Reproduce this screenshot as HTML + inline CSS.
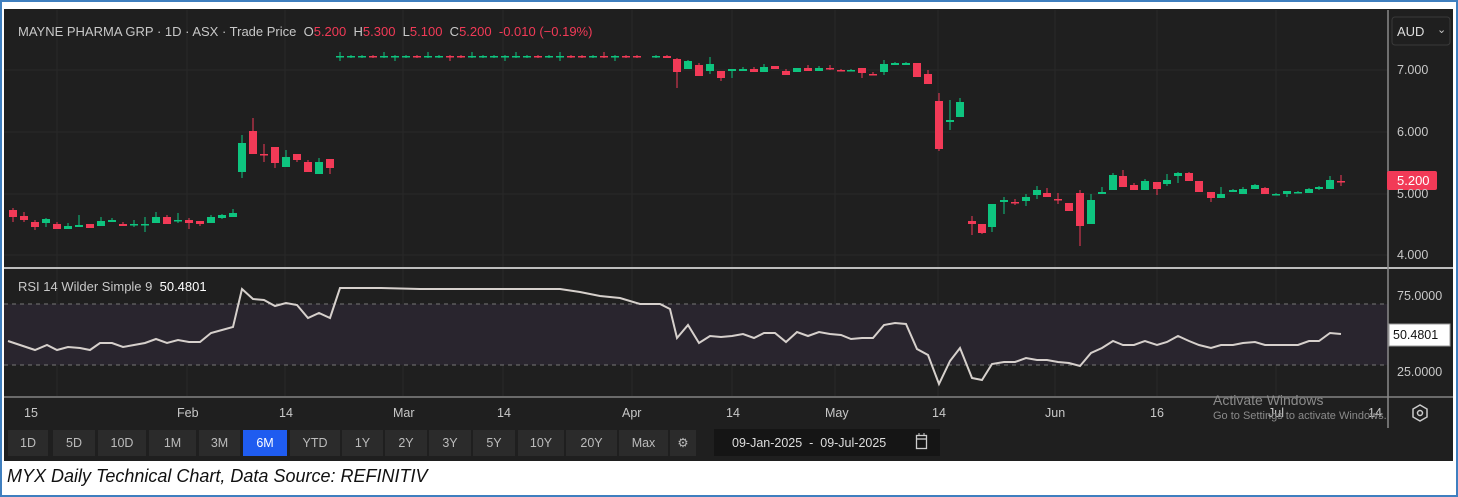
<!DOCTYPE html>
<html><head><meta charset="utf-8"><style>
html,body{margin:0;padding:0;width:1458px;height:497px;overflow:hidden;background:#fff;font-family:"Liberation Sans",sans-serif}
#frame{position:absolute;left:0;top:0;width:1454px;height:493px;border:2px solid #3f7fbf}
#dark{position:absolute;left:4px;top:9px;width:1449px;height:452px;background:#1f1f1f}
.cap{position:absolute;left:7px;top:466px;font-size:18px;font-style:italic;color:#111}
.btn{position:absolute;top:430px;height:26px;background:#2b2b2b;color:#bbb;font-size:12.5px;line-height:26px;text-align:center}
.t{position:absolute;font-size:12.5px;color:#c8c8c8}
</style></head><body>
<div id="frame"></div>
<div id="dark"></div>
<svg id="s" width="1458" height="497" style="position:absolute;left:0;top:0">
<g stroke="#282828" stroke-width="1">
<line x1="4" y1="70" x2="1388" y2="70"/><line x1="4" y1="132" x2="1388" y2="132"/><line x1="4" y1="194" x2="1388" y2="194"/><line x1="4" y1="255" x2="1388" y2="255"/>
<line x1="57" y1="10" x2="57" y2="396"/><line x1="187" y1="10" x2="187" y2="396"/><line x1="285" y1="10" x2="285" y2="396"/><line x1="403" y1="10" x2="403" y2="396"/><line x1="503" y1="10" x2="503" y2="396"/><line x1="632" y1="10" x2="632" y2="396"/><line x1="732" y1="10" x2="732" y2="396"/><line x1="835" y1="10" x2="835" y2="396"/><line x1="938" y1="10" x2="938" y2="396"/><line x1="1055" y1="10" x2="1055" y2="396"/><line x1="1157" y1="10" x2="1157" y2="396"/><line x1="1276" y1="10" x2="1276" y2="396"/>
</g>
<rect x="4" y="304" width="1384" height="61" fill="#29252e"/>
<line x1="4" y1="304" x2="1388" y2="304" stroke="#777" stroke-dasharray="4,4"/>
<line x1="4" y1="365" x2="1388" y2="365" stroke="#777" stroke-dasharray="4,4"/>
<line x1="4" y1="268" x2="1453" y2="268" stroke="#bdbdbd" stroke-width="2"/>
<line x1="4" y1="397" x2="1453" y2="397" stroke="#6a6a6a" stroke-width="2"/>
<line x1="1388" y1="10" x2="1388" y2="428" stroke="#8a8a8a" stroke-width="1.5"/>
<g id="c"></g>
<polyline fill="none" stroke="#d6d0cc" stroke-width="2" points="8,341 20,345 35,350 47,345 57,350 68,347 80,348 90,350 100,343 112,343 123,347 134,345 145,343 156,339 167,343 178,340 189,342 200,342 211,333 222,330 233,327 242,289 253,299 264,300 275,306 286,303 297,305 308,318 319,313 330,318 340,288 380,288 420,289 560,289 580,292 600,296 620,298 640,304 660,304 670,309 677,338 688,325 699,343 710,336 721,337 732,336 743,334 754,338 764,333 775,333 786,342 797,332 808,336 819,332 830,334 841,335 851,339 862,338 873,338 884,325 895,323 906,324 917,349 928,355 939,384 950,361 960,348 972,378 982,380 992,364 1004,362 1015,362 1026,358 1037,360 1047,360 1058,362 1069,363 1080,366 1091,353 1102,348 1113,341 1123,345 1134,345 1145,341 1157,345 1167,342 1178,336 1189,341 1199,345 1211,348 1221,345 1233,345 1243,343 1255,342 1265,345 1276,345 1287,345 1298,345 1309,341 1319,341 1330,333 1341,334"/>
<rect x="1392" y="17" width="58" height="28" rx="3" fill="#1f1f1f" stroke="#3a3a3a"/>
<rect x="1387" y="171" width="50" height="19" rx="2" fill="#f23a57"/>
<rect x="1389" y="324" width="61" height="22" fill="#fff" stroke="#999"/>
<polygon points="1420,405 1427,409 1427,417 1420,421 1413,417 1413,409" fill="none" stroke="#ccc" stroke-width="1.5"/>
<circle cx="1420" cy="413" r="2.5" fill="none" stroke="#ccc" stroke-width="1.5"/>
<rect x="714" y="429" width="226" height="27" fill="#151515"/>
<rect x="916.5" y="435.5" width="10" height="13" fill="none" stroke="#ccc" stroke-width="1.3"/>
<line x1="916.5" y1="439" x2="926.5" y2="439" stroke="#ccc" stroke-width="1.3"/>
<line x1="919" y1="433" x2="919" y2="436" stroke="#ccc"/><line x1="924" y1="433" x2="924" y2="436" stroke="#ccc"/>
</svg>
<div class="t" style="left:18px;top:24px;font-size:13px">MAYNE PHARMA GRP · 1D · ASX · Trade Price&nbsp;&nbsp;O<span style="color:#f23a57">5.200</span>&nbsp;&nbsp;H<span style="color:#f23a57">5.300</span>&nbsp;&nbsp;L<span style="color:#f23a57">5.100</span>&nbsp;&nbsp;C<span style="color:#f23a57">5.200</span>&nbsp;&nbsp;<span style="color:#f23a57">-0.010 (−0.19%)</span></div>
<div class="t" style="left:18px;top:279px;font-size:13px">RSI 14 Wilder Simple 9&nbsp;&nbsp;<b style="color:#fff;font-weight:normal">50.4801</b></div>
<div class="t" style="left:1397px;top:24px;font-size:13px;color:#ddd">AUD</div>
<div class="t" style="left:1437px;top:23px;font-size:11px">⌄</div>
<div class="t" style="left:1397px;top:63px">7.000</div>
<div class="t" style="left:1397px;top:125px">6.000</div>
<div class="t" style="left:1397px;top:187px">5.000</div>
<div class="t" style="left:1397px;top:173px;color:#fff;font-size:13px">5.200</div>
<div class="t" style="left:1397px;top:248px">4.000</div>
<div class="t" style="left:1397px;top:289px">75.0000</div>
<div class="t" style="left:1393px;top:328px;color:#111">50.4801</div>
<div class="t" style="left:1397px;top:365px">25.0000</div>
<div class="t" style="left:24px;top:406px">15</div><div class="t" style="left:177px;top:406px">Feb</div><div class="t" style="left:279px;top:406px">14</div><div class="t" style="left:393px;top:406px">Mar</div><div class="t" style="left:497px;top:406px">14</div><div class="t" style="left:622px;top:406px">Apr</div><div class="t" style="left:726px;top:406px">14</div><div class="t" style="left:825px;top:406px">May</div><div class="t" style="left:932px;top:406px">14</div><div class="t" style="left:1045px;top:406px">Jun</div><div class="t" style="left:1150px;top:406px">16</div><div class="t" style="left:1268px;top:406px">Jul</div><div class="t" style="left:1368px;top:406px">14</div>
<div class="t" style="left:1213px;top:392px;font-size:14px;color:#8a8a8a">Activate Windows</div>
<div class="t" style="left:1213px;top:410px;font-size:11px;color:#8a8a8a">Go to Settings to activate Windows.</div>
<div class="btn" style="left:8px;width:40px">1D</div><div class="btn" style="left:53px;width:42px">5D</div><div class="btn" style="left:98px;width:48px">10D</div><div class="btn" style="left:149px;width:47px">1M</div><div class="btn" style="left:199px;width:41px">3M</div><div class="btn" style="left:243px;width:44px;background:#1f5cf0;color:#fff">6M</div><div class="btn" style="left:290px;width:50px">YTD</div><div class="btn" style="left:342px;width:41px">1Y</div><div class="btn" style="left:385px;width:42px">2Y</div><div class="btn" style="left:429px;width:42px">3Y</div><div class="btn" style="left:473px;width:42px">5Y</div><div class="btn" style="left:518px;width:46px">10Y</div><div class="btn" style="left:566px;width:51px">20Y</div><div class="btn" style="left:619px;width:49px">Max</div><div class="btn" style="left:670px;width:26px">⚙</div>
<div class="t" style="left:732px;top:436px;color:#ddd">09-Jan-2025&nbsp;&nbsp;-&nbsp;&nbsp;09-Jul-2025</div>
<div class="cap">MYX Daily Technical Chart, Data Source: REFINITIV</div>
<script>
var G="#0ec47f",R="#f23a57";
var d=[
[13,R,210,217,208,222],[24,R,216,220,212,222],[35,R,222,227,220,230],[46,G,219,223,218,227],[57,R,224,229,222,229],[68,G,226,229,223,229],[79,G,225,227,215,227],[90,R,224,228,224,228],[101,G,221,226,217,226],[112,G,220,222,218,222],[123,R,224,226,222,226],[134,G,224,225,220,227],[145,G,224,225,217,232],[156,G,217,223,212,223],[167,R,217,224,215,224],[178,G,220,221,213,223],[189,R,220,223,218,229],[200,R,221,224,221,226],[211,G,217,223,215,223],[222,G,215,218,214,219],[233,G,213,217,209,217],
[242,G,143,172,135,178],[253,R,131,154,118,154],[264,R,154,155,144,162],[275,R,147,163,147,168],[286,G,157,167,150,167],[297,R,154,160,154,162],[308,R,162,172,160,172],[319,G,162,174,158,174],[330,R,159,168,159,174]];
var f=[G,G,G,R,G,G,G,R,G,G,R,R,G,G,G,G,G,G,R,G,G,R,R,G,R,G,R,R,G,R];
for(var i=0;i<28;i++){var x=340+i*11,c=f[i];d.push([x,c,56,57,i%4==0?52:55,i%5==0?61:58]);}
d=d.concat([[656,G,56,57,55,58],[667,R,56,58,55,58],[677,R,59,72,58,88],[688,G,61,69,60,69],[699,R,65,76,63,76],[710,G,64,71,57,74],[721,R,71,78,71,81],[732,G,69,71,69,78],[743,G,69,71,67,71],[754,R,69,72,67,72],[764,G,67,72,64,72],[775,R,66,69,66,69],[786,R,71,75,69,75],[797,G,68,72,68,72],[808,R,68,71,65,71],[819,G,68,71,66,71],[830,R,68,69,65,70],[841,R,70,71,69,71],[851,G,70,71,69,71],[862,R,68,73,68,78],[873,R,74,75,72,75],[884,G,64,72,60,75],[895,G,63,65,62,65],[906,G,63,65,62,65],[917,R,63,77,63,77],[928,R,74,84,70,84],[939,R,101,149,93,151],[950,G,120,122,100,130],[960,G,102,117,98,117],
[972,R,221,224,216,235],[982,R,224,233,224,234],[992,G,204,227,204,232],[1004,G,200,202,197,214],[1015,R,202,203,199,205],[1026,G,197,201,194,206],[1037,G,190,195,186,199],[1047,R,193,197,188,197],[1058,R,199,200,193,204],[1069,R,203,211,203,211],[1080,R,193,226,190,246],[1091,G,200,224,194,224],[1102,G,192,194,187,194],[1113,G,175,190,173,190],[1123,R,176,187,170,187],[1134,R,185,190,183,190],[1145,G,181,190,179,190],[1157,R,182,189,182,195],[1167,G,180,184,174,186],[1178,G,173,176,172,183],[1189,R,173,181,172,181],[1199,R,181,192,181,192],[1211,R,192,198,192,202],[1221,G,194,198,187,198],[1233,G,190,192,189,192],[1243,G,189,194,187,194],[1255,G,185,189,184,189],[1265,R,188,194,187,194],[1276,G,194,195,193,195],[1287,G,191,194,191,197],[1298,G,192,193,191,193],[1309,G,189,193,188,193],[1319,G,187,189,186,190],[1330,G,180,189,176,189],[1341,R,181,182,175,186]]);
var s="";d.forEach(function(a){s+='<line x1="'+a[0]+'" x2="'+a[0]+'" y1="'+a[4]+'" y2="'+a[5]+'" stroke="'+a[1]+'" stroke-width="1"/><rect x="'+(a[0]-4)+'" y="'+a[2]+'" width="8" height="'+Math.max(1.5,a[3]-a[2])+'" fill="'+a[1]+'"/>';});
document.getElementById("c").innerHTML=s;
</script>
</body></html>
